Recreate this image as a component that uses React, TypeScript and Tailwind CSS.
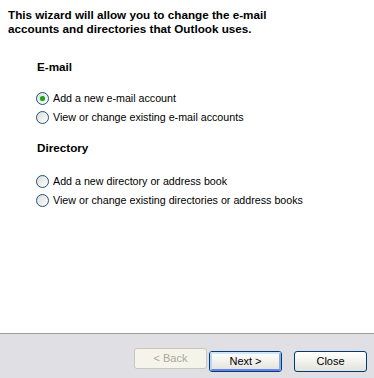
import React, { useState } from 'react';

const font = { fontFamily: '"Liberation Sans", Arial, sans-serif' };

function Radio({ checked, label, onClick }: { checked: boolean; label: string; onClick: () => void }) {
    return (
        <label onClick={onClick} className="flex items-center h-[19px] cursor-default">
            <span className="relative w-[13px] h-[13px] rounded-full border border-[#1c5180] bg-gradient-to-br from-[#dcdcd7] to-white flex items-center justify-center">
                {checked && <span className="w-[5px] h-[5px] rounded-full bg-[#21a121] shadow-[0_0_1px_#6fd66f]" />}
            </span>
            <span className="ml-[4px] text-[10.7px] text-black">{label}</span>
        </label>
    );
}

function XpButton({ children, disabled, isDefault }: { children: React.ReactNode; disabled?: boolean; isDefault?: boolean }) {
    if (disabled) {
        return (
            <button disabled className="w-[73px] h-[21px] rounded-[3px] border border-[#c9c7ba] bg-[#f5f4ea] text-[11px] text-[#aca899]">
                {children}
            </button>
        );
    }
    return (
        <button className="w-[73px] h-[21px] rounded-[3px] border border-[#003c74] bg-gradient-to-b from-white to-[#e3e3db] p-0 text-[11px] text-black">
            <span
                className={
                    isDefault
                        ? 'flex h-full w-full items-center justify-center rounded-[2px] border-[2px] border-t-[#cee7ff] border-l-[#bcd4f6] border-r-[#89ade4] border-b-[#6982ee]'
                        : 'flex h-full w-full items-center justify-center'
                }
            >
                {children}
            </span>
        </button>
    );
}

export default function App() {
    const [email, setEmail] = useState('add');
    const [dir, setDir] = useState('');

    return (
        <div className="w-[374px] h-[378px] bg-white flex flex-col" style={font}>
            <div className="flex-1">
                {/* Intro */}
                <p className="pl-[8px] pt-[8px] text-[11.7px] leading-[14px] font-bold text-black">
                    This wizard will allow you to change the e-mail
                    <br />
                    accounts and directories that Outlook uses.
                </p>

                {/* E-mail */}
                <div className="pl-[37px] mt-[24px]">
                    <h2 className="text-[11.7px] leading-[14px] font-bold text-black">E-mail</h2>
                    <div className="mt-[15px] -ml-[1px]">
                        <Radio checked={email === 'add'} label="Add a new e-mail account" onClick={() => setEmail('add')} />
                        <Radio checked={email === 'view'} label="View or change existing e-mail accounts" onClick={() => setEmail('view')} />
                    </div>
                </div>

                {/* Directory */}
                <div className="pl-[37px] mt-[14px]">
                    <h2 className="text-[11.7px] leading-[14px] font-bold text-black">Directory</h2>
                    <div className="mt-[17px] -ml-[1px]">
                        <Radio checked={dir === 'add'} label="Add a new directory or address book" onClick={() => setDir('add')} />
                        <Radio checked={dir === 'view'} label="View or change existing directories or address books" onClick={() => setDir('view')} />
                    </div>
                </div>
            </div>

            {/* Footer */}
            <div className="h-[45px] border-t border-[#9d9da1] bg-[#e0dfe3] flex items-start justify-end pt-[14px] pr-[7px]">
                <div className="flex">
                    <XpButton disabled>&lt; Back</XpButton>
                    <div className="ml-[2px]">
                        <XpButton isDefault>Next &gt;</XpButton>
                    </div>
                    <div className="ml-[12px]">
                        <XpButton>Close</XpButton>
                    </div>
                </div>
            </div>
        </div>
    );
}
